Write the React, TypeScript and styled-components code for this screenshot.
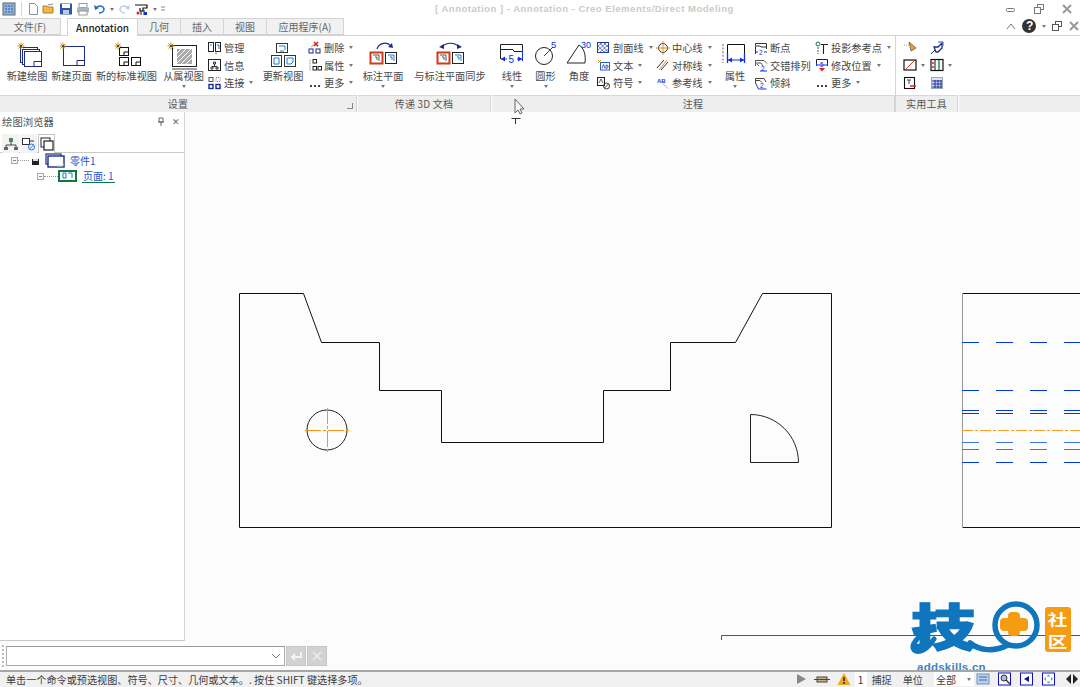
import React from "react";
import styled, { createGlobalStyle } from "styled-components";

const Global = createGlobalStyle`
  html, body { margin: 0; padding: 0; background: #fff; }
  #root { width: 1080px; height: 687px; }
  * { box-sizing: border-box; }
`;
const FONT = `"Noto Sans CJK SC", "Liberation Sans", sans-serif`;

const Page = styled.div`
  width: 1080px; height: 687px; overflow: hidden; position: relative;
  display: flex; flex-direction: column;
  font-family: ${FONT}; font-size: 10.2px; color: #484848; background: #fff;
`;
const TitleBar = styled.div`
  height: 18px; flex: none; display: flex; align-items: center; background: #fff; padding-left: 2px;
`;
const Qat = styled.div`
  width: 433px; display: flex; align-items: center; gap: 3px; flex: none;
`;
const QatSep = styled.span`
  width: 1px; height: 14px; background: #d4d4d4; margin: 0 2px;
`;
const Title = styled.div`
  font-family: "Liberation Sans", sans-serif; font-weight: 700; font-size: 9.6px; letter-spacing: .47px;
  color: #cbcbcb; white-space: nowrap; width: 300px; padding-bottom: 2px;
`;
const WinButtons = styled.div`
  margin-left: auto; display: flex; gap: 14px; padding-right: 6px; align-items: center;
`;
const TabRow = styled.div`
  height: 18px; flex: none; display: flex; align-items: flex-end; background: #fff; position: relative;
  border-bottom: 1px solid #d2d2d2;
`;
const Tab = styled.div<{ $w: number; $active?: boolean; $mr?: number }>`
  width: ${p => p.$w}px; height: ${p => (p.$active ? 18 : 17)}px; margin-right: ${p => p.$mr ?? 0}px;
  display: flex; align-items: center; justify-content: center;
  background: ${p => (p.$active ? "#fff" : "#f1f1f1")};
  border: 1px solid #d4d4d4; border-bottom: ${p => (p.$active ? "none" : "1px solid #d2d2d2")};
  border-left-width: ${p => (p.$active ? 1 : 0)}px;
  margin-bottom: ${p => (p.$active ? -1 : 0)}px;
  color: ${p => (p.$active ? "#222" : "#666")}; font-size: 10px; z-index: ${p => (p.$active ? 1 : 0)};
  font-weight: ${p => (p.$active ? 500 : 400)};
`;
const HelpArea = styled.div`
  margin-left: auto; display: flex; align-items: center; gap: 5px; padding-right: 0; height: 18px;
`;
const Ribbon = styled.div`
  height: 76px; flex: none; display: flex; background: #fff;
`;
const Group = styled.div<{ $w: number; $strong?: boolean }>`
  width: ${p => p.$w}px; flex: none; display: flex; flex-direction: column;
  border-right: 1px solid ${p => (p.$strong ? "#d6d6d6" : "transparent")};
`;
const GroupBody = styled.div<{ $pl?: number }>`
  height: 59px; display: flex; padding-left: ${p => p.$pl ?? 0}px;
`;
const GroupFooter = styled.div`
  height: 17px; background: #eeeeee; border-top: 1px solid #d8d8d8; border-right: 1px solid #d4d4d4;
  display: flex; align-items: center; justify-content: center; position: relative; color: #555; font-size: 10px;
  letter-spacing: .2px; padding-bottom: 1px;
`;
const FillFooter = styled.div`
  flex: 1; align-self: flex-end; height: 17px; background: #eeeeee; border-top: 1px solid #d8d8d8;
`;
const Corner = styled.span`
  position: absolute; right: 3px; bottom: 3px; width: 6px; height: 6px;
  border-right: 1px solid #888; border-bottom: 1px solid #888;
`;
const BigButton = styled.div<{ $w: number }>`
  width: ${p => p.$w}px; flex: none; display: flex; flex-direction: column; align-items: center; padding-top: 3px;
  white-space: nowrap;
`;
const BigIcon = styled.div`
  height: 30px; display: flex; align-items: flex-start; justify-content: center;
`;
const BigLabel = styled.div`
  height: 14px; line-height: 14px;
`;
const Caret = styled.span`
  display: inline-block; width: 0; height: 0; flex: none;
  border-left: 2.5px solid transparent; border-right: 2.5px solid transparent; border-top: 3px solid #777;
`;
const BigCaret = styled(Caret)`
  margin-top: 2px;
`;
const SmallCol = styled.div<{ $w: number; $sep?: boolean }>`
  width: ${p => p.$w}px; flex: none; display: flex; flex-direction: column; padding-top: 3px;
`;
const SmallRow = styled.div`
  height: 17.5px; display: flex; align-items: center; gap: 2px; white-space: nowrap;
`;
const RowCaret = styled(Caret)`
  margin-left: 3px;
`;
const UtilGrid = styled.div`
  display: grid; grid-template-columns: 27px 27px; grid-auto-rows: 17.5px; padding: 3px 0 0 7px;
`;
const UtilCell = styled.div`
  display: flex; align-items: center; gap: 4px;
`;
const Body = styled.div`
  flex: 1; min-height: 0; display: grid; grid-template-columns: 185px 145px 1fr; grid-template-rows: 1fr 29px;
`;
const Panel = styled.div`
  grid-column: 1; grid-row: 1; background: #fff; border-right: 1px solid #d4d4d4; border-bottom: 1px solid #c8c8c8;
  display: flex; flex-direction: column; z-index: 1;
`;
const PanelTitle = styled.div`
  height: 19px; display: flex; align-items: center; padding: 0 4px 0 2px; color: #555; font-size: 10.4px; justify-content: space-between;
`;
const PanelBtns = styled.div`
  display: flex; gap: 7px; align-items: center; color: #666; font-family: "Liberation Sans", sans-serif; font-size: 9px;
`;
const PanelTabs = styled.div`
  height: 22px; display: flex; border-bottom: 1px solid #c8c8c8; padding: 3px 0 0 2px; gap: 1px;
`;
const PanelTab = styled.div<{ $active?: boolean }>`
  width: 17px; height: 19px; display: flex; align-items: center; justify-content: center;
  background: ${p => (p.$active ? "#fff" : "#f3f3f3")};
  border: 1px solid ${p => (p.$active ? "#c4c4c4" : "transparent")}; border-bottom: none;
`;
const Tree = styled.div`
  display: flex; flex-direction: column; margin-top: -1px;
`;
const TreeRow = styled.div<{ $pl: number; $h: number }>`
  display: flex; align-items: center; padding-left: ${p => p.$pl}px; height: ${p => p.$h}px; white-space: nowrap;
`;
const Expander = styled.span`
  width: 7px; height: 7px; border: 1px solid #aaa; flex: none; position: relative; background: #f6f6f6;
  &::after { content: ""; position: absolute; left: 1px; right: 1px; top: 2px; height: 1px; background: #888; }
`;
const Dots = styled.span<{ $w: number }>`
  width: ${p => p.$w}px; border-top: 1px dotted #999; flex: none;
`;
const PartLabel = styled.span`
  color: #2255cc; margin-left: 5px; font-size: 10px;
`;
const PageLabel = styled.span`
  color: #2255cc; margin-left: 4px; font-size: 10px; border-bottom: 1px solid #0d7a3e; line-height: 12px;
  padding: 0 1px;
`;
const Canvas = styled.div`
  grid-column: 2 / 4; grid-row: 1 / 3; background: #fcfcfc; position: relative; overflow: visible; min-height: 0;
`;
const Drawing = styled.svg`
  display: block; position: absolute; left: 0; top: 0;
`;
const CommandBar = styled.div`
  grid-column: 1 / 3; grid-row: 2; z-index: 1; display: flex; align-items: center; gap: 1px; padding: 0 5px 0 2px; background: #fcfcfc;
`;
const Grip = styled.span`
  width: 3px; height: 22px; border-left: 2px dotted #bbb; flex: none;
`;
const CmdInput = styled.div`
  width: 279px; height: 20px; margin-left: 0; background: #fff; border: 1px solid #aaa; border-top-color: #999;
  display: flex; align-items: center; justify-content: flex-end; padding-right: 3px; flex: none;
`;
const CmdBtn = styled.div`
  width: 20px; height: 20px; background: #d2d2d2; border: 1px solid #c6c6c6; display: flex; align-items: center; justify-content: center;
  flex: none;
`;
const StatusBar = styled.div`
  height: 17px; flex: none; background: #f0f0f0; border-top: 2px solid #a6a6a6; display: flex; align-items: center;
  padding: 0 0 1px 6px; font-size: 10.15px; color: #3c3c3c; white-space: nowrap; position: relative; z-index: 2;
`;
const StatusRight = styled.div`
  margin-left: auto; display: flex; align-items: center;
`;
const StatusGlyphs = styled.div`
  display: flex; align-items: center; gap: 3.5px;
`;
const NumBox = styled.span`
  width: 12px; height: 15px; background: #fff; display: inline-flex; align-items: center; justify-content: center; color: #333;
  margin: 0 5px 0 3px;
`;
const StatusText = styled.span`
  margin-right: 11px; color: #444;
`;
const StatusSelect = styled.div`
  width: 40px; height: 14px; background: #fff; display: flex; align-items: center; justify-content: space-between; padding: 0 3px 0 2px;
  margin-right: 2px;
`;
const StatusIcons = styled.div`
  display: flex; align-items: center; gap: 8px;
`;
const Logo = styled.div`
  position: absolute; left: 723px; top: 487px; width: 172px; height: 84px; z-index: 1; pointer-events: none;
`;
const LogoChar = styled.span`
  position: absolute; left: 3px; top: 0; font-size: 50px; line-height: 50px; font-weight: 900; color: #0f75bd;
  -webkit-text-stroke: 1.2px #0f75bd;
  transform: scaleX(1.3); transform-origin: left;
`;
const LogoUrl = styled.span`
  position: absolute; left: 9px; top: 62px; font-family: "Liberation Sans", sans-serif; font-size: 11.5px; font-weight: 700; color: #3b84c4;
  letter-spacing: .25px; line-height: 12px;
`;
const Badge = styled.div`
  position: absolute; left: 137px; top: 8px; width: 26px; height: 45px; background: #f59c12; border-radius: 3px;
  display: flex; flex-direction: column; align-items: center; justify-content: center; color: #fff; font-weight: 700; font-size: 15px; line-height: 22px;
`;
const BadgeChar = styled.span`
  display: block; height: 22px; transform: scaleX(1.3);
`;
const Cursor = styled.svg`
  position: absolute; left: 510px; top: 98px; z-index: 5;
`;

/* ------------------------ icons ------------------------ */
const navy = "#1c2a8c";
const blue = "#1030d8";
const Ic = ({ w = 14, h = 14, children }: { w?: number; h?: number; children: React.ReactNode }) => (
  <svg width={w} height={h} viewBox={`0 0 ${w} ${h}`} style={{ flex: "none", display: "block" }} fill="none">{children}</svg>
);
const Star = ({ x, y }: { x: number; y: number }) => (
  <g stroke="#c9971c" strokeWidth="1">
    <path d={`M${x - 3.5} ${y}H${x + 3.5}M${x} ${y - 3.5}V${y + 3.5}M${x - 2.5} ${y - 2.5}L${x + 2.5} ${y + 2.5}M${x + 2.5} ${y - 2.5}L${x - 2.5} ${y + 2.5}`} />
    <circle cx={x} cy={y} r="1" fill="#333" stroke="none" />
  </g>
);
const Sheet = ({ x, y, w, h }: { x: number; y: number; w: number; h: number }) => (
  <g stroke={navy} strokeWidth="1">
    <rect x={x + .5} y={y + .5} width={w} height={h} fill="#fff" />
    <path d={`M${x + w - 7} ${y + h + .5}V${y + h - 4.5}H${x + w + .5}`} />
  </g>
);
const Mini = ({ x, y }: { x: number; y: number }) => (
  <g stroke="#111" strokeWidth="1">
    <rect x={x + .5} y={y + .5} width="9" height="8" fill="#fff" />
    <path d={`M${x + 5} ${y + 8}V${y + 5}H${x + 9}`} />
  </g>
);
const NewDrawing = () => (
  <Ic w={36} h={28}>
    <Sheet x={11} y={8} w={17} h={15} /><Sheet x={13} y={10} w={17} h={15} /><Sheet x={15} y={12} w={17} h={15} />
    <Star x={12} y={7} />
  </Ic>
);
const NewPage = () => (
  <Ic w={36} h={28}><Sheet x={9} y={7} w={21} h={19} /><Star x={9} y={7} /></Ic>
);
const NewStd = () => (
  <Ic w={36} h={28}><Mini x={10} y={8} /><Mini x={10} y={18} /><Mini x={22} y={18} /><Star x={9} y={7} /></Ic>
);
const FromView = () => (
  <Ic w={36} h={32}>
    <rect x="6.5" y="6.5" width="24" height="21" stroke="#222" fill="#fff" />
    <rect x="11" y="10" width="15" height="15" fill="#aaa" />
    <path d="M11 14l4-4M11 19l9-9M11 24l14-14M15 25l11-11M20 25l6-6" stroke="#fff" />
    <path d="M6 30h25" stroke="#444" />
    <Star x={5} y={7} />
  </Ic>
);
const UpdateView = () => (
  <Ic w={36} h={28}>
    <rect x="11.5" y="4.5" width="11" height="9" stroke="#333" fill="#fff" />
    <path d="M14 7h6v4" stroke="#1a7ad8" /><path d="M15 12h4" stroke="#1a7ad8" />
    <rect x="6.5" y="16.5" width="10" height="11" stroke="#333" fill="#fff" />
    <path d="M9 19h5v6H9z" stroke="#1a7ad8" />
    <rect x="19.5" y="16.5" width="11" height="11" stroke="#333" fill="#fff" />
    <path d="M22 19h6v4l-2 2h-4z" stroke="#1a7ad8" />
  </Ic>
);
const Frames = ({ x1, red = true }: { x1: number; red?: boolean }) => (
  <g>
    <rect x={x1 + .5} y="13.5" width="12" height="11" fill="#fff" stroke={red ? "#d23a12" : "#333"} strokeWidth={red ? 2 : 1} />
    <path d={`M${x1 + 3} 16h6v6M${x1 + 5} 18h2v3`} stroke="#555" />
    <rect x={x1 + 15.5} y="13.5" width="11" height="11" fill="#fff" stroke="#222" />
    <path d={`M${x1 + 18} 16h6v6M${x1 + 20} 18h2v3`} stroke="#1a7ad8" />
  </g>
);
const ToPlane = () => (
  <Ic w={30} h={28}>
    <Frames x1={2} />
    <path d="M9 10C11 4 19 2 23 7" stroke={navy} strokeWidth="1.2" /><path d="M20 8l5 1-1-5z" fill={navy} />
  </Ic>
);
const SyncPlane = () => (
  <Ic w={32} h={28}>
    <Frames x1={3} />
    <path d="M8 8C12 3 21 3 25 8" stroke={navy} strokeWidth="1.2" /><path d="M5 8l5 2 0-5zM28 8l-5 2 0-5z" fill={navy} />
  </Ic>
);
const Linear = () => (
  <Ic w={26} h={28}>
    <path d="M1.5 20V5.5H23.5V20M1.5 10.5H14l1 2H23.5" stroke="#222" />
    <path d="M23.5 10v12" stroke={blue} />
    <path d="M2 20h6M18 20h5" stroke={blue} />
    <path d="M2 20l4-2.5v5zM23 20l-4-2.5v5z" fill={blue} />
    <text x="9.5" y="23.5" fontSize="10" fontFamily="Liberation Sans" fill={blue}>5</text>
  </Ic>
);
const Circular = () => (
  <Ic w={26} h={28}>
    <circle cx="11" cy="17" r="8.5" stroke="#222" />
    <path d="M11 17L20 8" stroke={blue} />
    <text x="18" y="9" fontSize="9.5" fontFamily="Liberation Sans" fill={blue}>5</text>
  </Ic>
);
const Angular = () => (
  <Ic w={28} h={28}>
    <path d="M2 24L14 6C19 9 21 16 20 24Z" stroke="#222" />
    <text x="16" y="9" fontSize="9" fontFamily="Liberation Sans" fill={blue}>30</text>
  </Ic>
);
const Props = () => (
  <Ic w={28} h={28}>
    <path d="M2 5v19" stroke="#999" strokeDasharray="2 1.6" strokeWidth="1.5" />
    <path d="M6.5 20V5.5H23.5V20" stroke="#111" />
    <path d="M6.5 14v10M23.5 14v10" stroke={blue} strokeWidth="1.3" />
    <path d="M7 21h16" stroke={blue} /><path d="M7 21l4-2.5v5zM23 21l-4-2.5v5z" fill={blue} />
  </Ic>
);
const S = { // small icons
  manage: <Ic><rect x=".5" y="1.5" width="5" height="9" fill="#fff" stroke="#222" /><rect x="7.5" y="1.5" width="5" height="9" fill="#fff" stroke="#222" /><path d="M2 4h2M9 4h2v4" stroke="#1a7ad8" /><circle cx="8" cy="12.5" r="1" fill="#e08a1c" /></Ic>,
  info: <Ic><rect x=".5" y="1.5" width="12" height="11" fill="#fff" stroke="#222" /><path d="M3 9h2v2H3zM8 9h2v2H8zM5.5 4h2v2h-2zM6.5 6v2M4 8.5h5" stroke="#333" /></Ic>,
  link: <Ic><rect x="1" y="1.5" width="4" height="4" stroke="#555" /><rect x="8" y="1.5" width="4" height="4" stroke="#c58" strokeDasharray="1 1" /><rect x="1" y="8.5" width="4" height="4" stroke={navy} strokeWidth="1.4" /><rect x="8" y="8.5" width="4" height="4" stroke={navy} strokeWidth="1.4" /></Ic>,
  del: <Ic><rect x="1" y="8" width="4" height="4" stroke={navy} /><rect x="8" y="8" width="4" height="4" stroke={navy} /><path d="M3 6l4-3 3 3" stroke="#c9971c" /><path d="M6 1l4 4M10 1L6 5" stroke="#d22" strokeWidth="1.5" /></Ic>,
  prop: <Ic><path d="M2 1.5v11" stroke="#999" strokeDasharray="2 1" /><rect x="5" y="1.5" width="3.5" height="3.5" stroke="#222" /><rect x="5" y="8.5" width="3.5" height="3.5" stroke="#222" /><rect x="10" y="8.5" width="3.5" height="3.5" stroke="#222" /></Ic>,
  more: <Ic><path d="M2 10h2M6 10h2M10 10h2" stroke="#444" strokeWidth="2" /></Ic>,
  hatch: <Ic><rect x=".5" y="1.5" width="11" height="10" fill="#fff" stroke="#223a9c" /><path d="M1 5l4-3M1 9l8-7M3 11l8-7M7 11l4-3M3 2l8 9M1 5l6 6M7 2l4 4" stroke="#2f4bb8" strokeWidth=".7" /></Ic>,
  text: <Ic><path d="M1 2l3 3M4 2L1 5" stroke="#c9971c" /><rect x="3.5" y="4.5" width="9" height="7.5" stroke="#2b5fd0" /><path d="M5 10.5l1.5-4 1.5 4M9 7v3.5l2-1v-2z" stroke="#223a9c" strokeWidth=".8" /></Ic>,
  sym: <Ic><rect x=".5" y="1.5" width="7" height="8" fill="#fff" stroke="#222" /><path d="M2 7l2-4 2 4" stroke="#333" strokeWidth=".8" /><circle cx="9.5" cy="10" r="3" stroke="#333" /><path d="M7.5 12l4-4" stroke="#333" /></Ic>,
  center: <Ic><circle cx="7" cy="7" r="4.5" stroke="#333" /><path d="M0 7h14M7 0v14" stroke="#e08a1c" /></Ic>,
  sym2: <Ic><path d="M1 10l7-8M5 12l7-8" stroke="#333" /><path d="M3 12l8-10" stroke="#e08a1c" /></Ic>,
  ref: <Ic><text x="1" y="7" fontSize="6" fontFamily="Liberation Sans" fontWeight="700" fill="#2040d0">AB</text><path d="M7 8c2 1 4 3 5 5" stroke="#f0c8dc" strokeWidth="1.5" /></Ic>,
  brk: <Ic><path d="M1.5 8V2.5H12.5V8M1.5 5H6l1 1h5.5" stroke="#333" /><path d="M1.5 4v2" stroke="#d23a12" /><path d="M1 11h3M10 11h3" stroke={blue} /><path d="M1.5 8v5" stroke={blue} /><text x="5" y="13.5" fontSize="6.5" fontFamily="Liberation Sans" fill={blue}>2</text></Ic>,
  stag: <Ic><path d="M1.5 8V2.5H10l3 3M1.5 5H7l2 3" stroke="#555" /><path d="M1.5 2v4M3 6l2 2" stroke="#d23a12" /><path d="M6 13h7" stroke={blue} /><text x="7" y="12.5" fontSize="6.5" fontFamily="Liberation Sans" fill={blue}>2</text></Ic>,
  slant: <Ic><path d="M1.5 7V2.5H10L12 6M1.5 4.5H6l2 2" stroke="#444" /><path d="M1.5 7l3 6h8" stroke={blue} /><text x="6" y="12" fontSize="6.5" fontFamily="Liberation Sans" fill={blue}>2</text></Ic>,
  proj: <Ic><circle cx="3" cy="3" r="2" stroke="#0d7a3e" /><path d="M3 6v7" stroke="#555" strokeDasharray="2 1" /><path d="M6 3.5h7M8.5 3.5V13" stroke="#222" strokeWidth="1.1" /></Ic>,
  move: <Ic><path d="M1.5 6V1.5H12.5V6" stroke="#222" /><path d="M1.5 5v3M12.5 5v3M2 7h10" stroke={blue} /><text x="5" y="9" fontSize="6.5" fontFamily="Liberation Sans" fill={blue}>5</text><path d="M4 10l3 3.5 3-3.5z" fill="#d22" /></Ic>,
  u1: <Ic><path d="M1 4h7" stroke="#aaa" strokeDasharray="1 1" /><path d="M6 1l7 6-5 3z" fill="#f0a21e" stroke="#333" strokeWidth=".6" /></Ic>,
  u2: <Ic><path d="M1 13l5-5" stroke="#333" /><path d="M4 6h4l4-4v5l-4 4H6z" fill="#fff" stroke={navy} strokeWidth="1.3" /><path d="M8 1h5v4" stroke="#2b5fd0" /></Ic>,
  u3: <Ic><rect x="1" y="2" width="12" height="10" fill="#fff" stroke="#111" strokeWidth="1.2" /><path d="M3 11l8-8" stroke="#d23a12" /></Ic>,
  u4: <Ic><rect x="1" y="1.5" width="12" height="11" fill="#fff" stroke="#111" strokeWidth="1.2" /><path d="M5 2v10" stroke="#111" /><path d="M9 2v10" stroke="#0d7a3e" strokeWidth="1.3" /><circle cx="3" cy="5" r="1" fill="#d22" /><circle cx="3" cy="9" r="1" fill="#d22" /></Ic>,
  u5: <Ic><rect x="1.5" y="1.5" width="10" height="11" fill="#fff" stroke="#111" strokeWidth="1.1" /><path d="M4 4h4M6 4v4" stroke="#444" /><path d="M7 10h6" stroke="#d22" strokeWidth="1.5" /></Ic>,
  u6: <Ic><rect x="1.5" y="1.5" width="11" height="11" fill="#dde4f6" stroke="#9aa" /><path d="M2 5h10M2 8h10M2 11h10M5 4v8M8 4v8M11 4v8" stroke="#1c2a9c" /></Ic>,
};
const Row = ({ icon, t, caret }: { icon: React.ReactNode; t: string; caret?: boolean }) => (
  <SmallRow>{icon}<span>{t}</span>{caret && <RowCaret />}</SmallRow>
);
const Big = ({ w, icon, t, caret }: { w: number; icon: React.ReactNode; t: string; caret?: boolean }) => (
  <BigButton $w={w}><BigIcon>{icon}</BigIcon><BigLabel>{t}</BigLabel>{caret && <BigCaret />}</BigButton>
);

export default function App() {
  const dashYs: [number, string][] = [[342, "#0038e0"], [390, "#0038e0"], [410, "#0038e0"], [413, "#0038e0"], [442, "#3a76f0"], [449, "#3a76f0"], [462, "#0038e0"]];
  return (
    <Page>
      <Global />
      <TitleBar>
        <Qat>
          <Ic><rect x="1" y="1" width="12" height="12" fill="#8fb3d9" stroke="#666" /><path d="M3 4h8M3 7h8M3 10h8" stroke="#2c5f9e" strokeDasharray="2 1" /></Ic>
          <QatSep />
          <Ic w={12}><path d="M2.5 1.5h5l3 3v8h-8z" fill="#fff" stroke="#8894a8" /></Ic>
          <Ic><path d="M1 11V4h4l1 1h5v6z" fill="#f1b948" stroke="#b07f2c" /><path d="M6 3l5-1" stroke="#88a" /></Ic>
          <Ic><rect x="1" y="1.5" width="12" height="11" fill="#2f56a8" /><rect x="3" y="2" width="8" height="4" fill="#fff" /><rect x="4" y="8" width="6" height="4" fill="#bcc8de" /></Ic>
          <Ic><rect x="3" y="1.5" width="8" height="4" fill="#fff" stroke="#999" /><rect x="1" y="5.5" width="12" height="5" fill="#aeb4bc" /><rect x="3" y="9" width="8" height="4" fill="#fff" stroke="#999" /></Ic>
          <Ic><path d="M3 7C4 3 10 3 11 7c0 3-3 4-5 4" stroke="#2b6fc0" strokeWidth="1.6" /><path d="M1 3l1 5 4-2z" fill="#2b6fc0" /></Ic>
          <Caret />
          <Ic><path d="M11 7C10 3 4 3 3 7c0 3 3 4 5 4" stroke="#bfd0e4" strokeWidth="1.6" /><path d="M13 3l-1 5-4-2z" fill="#bfd0e4" /></Ic>
          <Ic w={16}><path d="M1 3h12v3H9v3H6V6" stroke="#111" strokeWidth="1.2" /><path d="M7 9v4M10 8v5" stroke="#111" /><circle cx="4" cy="11" r="1.5" fill="#d22" /><rect x="10" y="10" width="3" height="3" fill="#1030d8" /></Ic>
          <Caret />
          <Ic w={6}><path d="M1 5h4M1 8h4" stroke="#888" /></Ic>
        </Qat>
        <Title>[ Annotation ] - Annotation - Creo Elements/Direct Modeling</Title>
        <WinButtons>
          <Ic><rect x="2.5" y="6.5" width="8" height="3" stroke="#777" rx="1" /></Ic>
          <Ic><rect x="5.5" y="2.5" width="6" height="5" stroke="#777" /><rect x="2.5" y="5.5" width="6" height="6" stroke="#777" fill="#fff" /></Ic>
          <Ic><path d="M3 3l8 8M11 3l-8 8" stroke="#999" strokeWidth="2" /></Ic>
        </WinButtons>
      </TitleBar>
      <TabRow>
        <Tab $w={61} $mr={6}>文件(F)</Tab>
        <Tab $w={71} $active>Annotation</Tab>
        <Tab $w={43}>几何</Tab>
        <Tab $w={43}>插入</Tab>
        <Tab $w={43}>视图</Tab>
        <Tab $w={77}>应用程序(A)</Tab>
        <HelpArea>
          <Ic w={10} h={10}><path d="M1 8l4-5 4 5" stroke="#777" /></Ic>
          <Ic w={16} h={16}><circle cx="8" cy="8" r="7" fill="#333" /><text x="5" y="12" fontSize="12" fontWeight="700" fontFamily="Liberation Sans" fill="#fff">?</text></Ic>
          <Caret />
          <Ic w={12}><rect x="4.5" y="2.5" width="6" height="5" stroke="#555" /><rect x="1.5" y="5.5" width="6" height="6" stroke="#555" fill="#fff" /></Ic>
          <Ic w={12}><path d="M2 3l8 8M10 3l-8 8" stroke="#999" strokeWidth="2" /></Ic>
        </HelpArea>
      </TabRow>
      <Ribbon>
        <Group $w={358}>
          <GroupBody $pl={5}>
            <Big w={44} icon={<NewDrawing />} t="新建绘图" />
            <Big w={45} icon={<NewPage />} t="新建页面" />
            <Big w={65} icon={<NewStd />} t="新的标准视图" />
            <Big w={49} icon={<FromView />} t="从属视图" caret />
            <SmallCol $w={50}>
              <Row icon={S.manage} t="管理" />
              <Row icon={S.info} t="信息" />
              <Row icon={S.link} t="连接" caret />
            </SmallCol>
            <Big w={50} icon={<UpdateView />} t="更新视图" />
            <SmallCol $w={48}>
              <Row icon={S.del} t="删除" caret />
              <Row icon={S.prop} t="属性" caret />
              <Row icon={S.more} t="更多" caret />
            </SmallCol>
          </GroupBody>
          <GroupFooter>设置<Corner /></GroupFooter>
        </Group>
        <Group $w={134}>
          <GroupBody>
            <Big w={50} icon={<ToPlane />} t="标注平面" caret />
            <Big w={84} icon={<SyncPlane />} t="与标注平面同步" />
          </GroupBody>
          <GroupFooter>传递 3D 文档</GroupFooter>
        </Group>
        <Group $w={404} $strong>
          <GroupBody $pl={2}>
            <Big w={36} icon={<Linear />} t="线性" caret />
            <Big w={31} icon={<Circular />} t="圆形" caret />
            <Big w={36} icon={<Angular />} t="角度" />
            <SmallCol $w={59}>
              <Row icon={S.hatch} t="剖面线" caret />
              <Row icon={S.text} t="文本" caret />
              <Row icon={S.sym} t="符号" caret />
            </SmallCol>
            <SmallCol $w={60}>
              <Row icon={S.center} t="中心线" caret />
              <Row icon={S.sym2} t="对称线" caret />
              <Row icon={S.ref} t="参考线" caret />
            </SmallCol>
            <Big w={38} icon={<Props />} t="属性" caret />
            <SmallCol $w={61}>
              <Row icon={S.brk} t="断点" />
              <Row icon={S.stag} t="交错排列" />
              <Row icon={S.slant} t="倾斜" />
            </SmallCol>
            <SmallCol $w={79}>
              <Row icon={S.proj} t="投影参考点" caret />
              <Row icon={S.move} t="修改位置" caret />
              <Row icon={S.more} t="更多" caret />
            </SmallCol>
          </GroupBody>
          <GroupFooter>注程</GroupFooter>
        </Group>
        <Group $w={63}>
          <GroupBody>
            <UtilGrid>
              <UtilCell>{S.u1}</UtilCell><UtilCell>{S.u2}</UtilCell>
              <UtilCell>{S.u3}<Caret /></UtilCell><UtilCell>{S.u4}<Caret /></UtilCell>
              <UtilCell>{S.u5}</UtilCell><UtilCell>{S.u6}</UtilCell>
            </UtilGrid>
          </GroupBody>
          <GroupFooter>实用工具</GroupFooter>
        </Group>
        <FillFooter />
      </Ribbon>
      <Body>
        <Panel>
          <PanelTitle>绘图浏览器<PanelBtns><Ic w={8} h={10}><path d="M2 1h4v4H2zM1 5h6M4 5v4" stroke="#666" /></Ic><span>✕</span></PanelBtns></PanelTitle>
          <PanelTabs>
            <PanelTab><Ic><rect x="5" y="1" width="4" height="4" fill="#4c8a5c" /><path d="M7 5v3M2 12V8h10v4" stroke="#444" /><rect x="0" y="10" width="4" height="3" fill="#666" /><rect x="10" y="10" width="4" height="3" fill="#666" /></Ic></PanelTab>
            <PanelTab><Ic><rect x=".5" y="1.5" width="7" height="6" fill="#fff" stroke="#333" /><path d="M8 4h4" stroke="#333" /><circle cx="9.5" cy="10" r="3" stroke="#2b7ad8" /><path d="M7.5 12l4-4" stroke="#2b7ad8" /></Ic></PanelTab>
            <PanelTab $active><Ic><rect x="1" y="1" width="9" height="9" stroke="#222" /><rect x="4" y="4" width="9" height="9" fill="#fff" stroke="#222" strokeWidth="1.2" /></Ic></PanelTab>
          </PanelTabs>
          <Tree>
            <TreeRow $pl={11} $h={16}>
              <Expander /><Dots $w={11} />
              <Ic w={14} h={14}><rect x="3" y="6" width="7" height="6" fill="#222" /><rect x="4" y="6" width="5" height="2" fill="#ddd" /></Ic>
              <Ic w={22} h={15}><rect x="3" y="1" width="15" height="10" stroke={navy} strokeWidth="1.2" fill="#fff" /><rect x="5" y="3" width="16" height="11" stroke={navy} strokeWidth="1.4" fill="#fff" /><path d="M14 13h6v-3" stroke="#ccc" /></Ic>
              <PartLabel>零件1</PartLabel>
            </TreeRow>
            <TreeRow $pl={37} $h={16}>
              <Expander /><Dots $w={14} />
              <Ic w={20} h={12}><rect x="1" y="1" width="17" height="10" fill="#fff" stroke="#0d7a3e" strokeWidth="2" /><path d="M5 3v5h3V3zM10 3h4v5" stroke="#1a7ad8" /></Ic>
              <PageLabel>页面: 1</PageLabel>
            </TreeRow>
          </Tree>
        </Panel>
        <Canvas>
          <Drawing width={895} height={558} viewBox="185 112 895 558" fill="none">
            <path d="M239.5 293.5H303.5L321.5 342.5H379.5V390.5H441.5V442.5H603.5V390.5H670.5V342.5H735.5L762.5 293.5H831.5V527.5H239.5Z" stroke="#111" />
            <circle cx="327" cy="430" r="20" stroke="#222" />
            <path d="M305 430.5H349" stroke="#ff9414" strokeDasharray="16 2 3 2" />
            <path d="M327.5 408V452" stroke="#ff9414" strokeDasharray="16 2 3 2" />
            <path d="M750.5 414.5V462.5H798.5C798.5 436 777 414.5 750.5 414.5Z" stroke="#222" />
            <path d="M962.5 293.5H1080M962.5 527.5H1080" stroke="#111" />
            <path d="M962.5 293V528" stroke="#999" />
            {dashYs.map(([y, c]) => (
              <path key={y} d={`M962 ${y + .5}H979M996 ${y + .5}H1013M1030 ${y + .5}H1047M1064 ${y + .5}H1080`} stroke={c} />
            ))}
            <path d="M962 430.5H1080" stroke="#ff9c2e" strokeDasharray="11 2 3 2" />
            <path d="M721.5 640V635.5H1080" stroke="#555" />
          </Drawing>
          <Logo>
            <svg width="172" height="72" viewBox="0 0 172 72" fill="none" style={{ position: "absolute", left: 0, top: 0 }}>
              <circle cx="108" cy="26" r="21" stroke="#0f75bd" strokeWidth="5.5" />
              <path d="M100 46C86 53 72 52 62 44" stroke="#0f75bd" strokeWidth="5.5" strokeLinecap="round" />
              <path d="M20 30C10 38 2 46 6 51C11 55 20 50 26 40" stroke="#0f75bd" strokeWidth="5" strokeLinecap="round" />
              <rect x="92" y="19" width="28" height="13" rx="4" fill="#f59c12" />
              <rect x="100" y="13" width="12" height="24" rx="4" fill="#f59c12" />
            </svg>
            <LogoChar>技</LogoChar>
            <Badge><BadgeChar>社</BadgeChar><BadgeChar>区</BadgeChar></Badge>
            <LogoUrl>addskills.cn</LogoUrl>
          </Logo>
        </Canvas>
        <CommandBar>
          <Grip />
          <CmdInput><Ic w={10} h={8}><path d="M1 2l4 4 4-4" stroke="#777" /></Ic></CmdInput>
          <CmdBtn><Ic><path d="M12 3v5H3M6 5L3 8l3 3" stroke="#f4f4f4" strokeWidth="2" /></Ic></CmdBtn>
          <CmdBtn><Ic w={12} h={12}><path d="M2 2l8 8M10 2l-8 8" stroke="#ececec" strokeWidth="1.6" /></Ic></CmdBtn>
        </CommandBar>
      </Body>
      <StatusBar>
        单击一个命令或预选视图、符号、尺寸、几何或文本。. 按住 SHIFT 键选择多项。
        <StatusRight>
          <StatusGlyphs>
            <Ic w={12}><path d="M2 2l9 5-9 5z" fill="#888" /></Ic>
            <Ic w={22}><rect x="7" y="5" width="10" height="5" fill="#c9b18a" stroke="#444" /><path d="M4 7.5h16" stroke="#444" /></Ic>
            <Ic w={16}><path d="M8 1l6.5 12h-13z" fill="#f2a81d" /><path d="M8 5v4M8 10v2" stroke="#222" strokeWidth="1.4" /></Ic>
          </StatusGlyphs>
          <NumBox>1</NumBox>
          <StatusText>捕捉</StatusText>
          <StatusText>单位</StatusText>
          <StatusSelect>全部<Caret /></StatusSelect>
          <StatusIcons>
            <Ic w={14}><rect x="1" y="2" width="12" height="10" fill="#b9d0ec" stroke="#6e8fbd" /><path d="M3 5h8M3 8h8" stroke="#44689c" /></Ic>
            <Ic><rect x=".5" y="1" width="12" height="12" fill="#fff" stroke="#1010c0" /><circle cx="6" cy="6" r="3" fill="#9fc0e0" stroke="#333" /><path d="M8 8l4 4" stroke="#333" strokeWidth="1.4" /></Ic>
            <Ic><rect x=".5" y="1" width="12" height="12" fill="#fff" stroke="#1010c0" /><path d="M9 4v6L4 7z" fill="#10109c" /></Ic>
            <Ic><rect x=".5" y="1" width="12" height="12" fill="#fff" stroke="#1010c0" /><path d="M6.5 2.5l2 2h-4zM6.5 11.5l2-2h-4zM2 7l2-2v4zM11 7L9 5v4z" fill="#5b9bd8" /></Ic>
            <Ic w={16}><path d="M7 2v10L2 7zM9 2v10l5-5z" fill="#222" /></Ic>
          </StatusIcons>
        </StatusRight>
      </StatusBar>
      <Cursor width="16" height="28" viewBox="0 0 16 28" fill="none">
        <path d="M5 1v14l3-3 2 4 2-1-2-4h4z" fill="#f5f5f5" stroke="#666" />
        <path d="M1.5 20.5h9M5.5 20v6" stroke="#333" />
      </Cursor>
    </Page>
  );
}
